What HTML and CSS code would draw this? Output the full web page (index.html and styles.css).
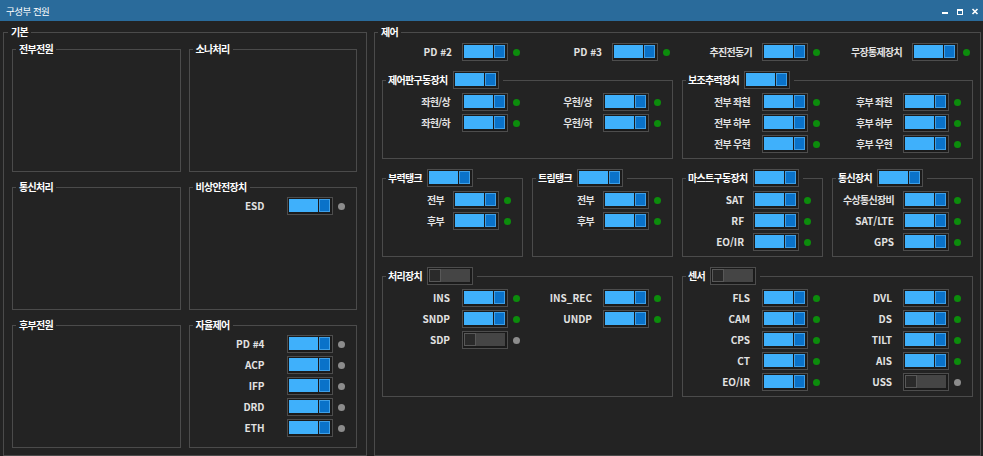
FILE: index.html
```html
<!DOCTYPE html>
<html lang="ko">
<head>
    <meta charset="UTF-8">
    <meta name="viewport" content="width=device-width, initial-scale=1.0">
    <title>구성부 전원</title>
    <link rel="stylesheet" href="styles.css">
</head>
<body>
<div class="window">

    <!-- 타이틀 바 -->
    <div class="titlebar">
        <span class="title">구성부 전원</span>
        <div class="winbtns">
            <svg width="10" height="10" viewBox="0 0 10 10"><line x1="2" y1="7" x2="8" y2="7" stroke="#fff" stroke-width="2"/></svg>
            <svg width="10" height="10" viewBox="0 0 10 10"><rect x="2.5" y="3.5" width="5" height="5" fill="none" stroke="#fff" stroke-width="1"/><line x1="2" y1="4" x2="8" y2="4" stroke="#fff" stroke-width="2"/></svg>
            <svg width="10" height="10" viewBox="0 0 10 10"><path d="M2.5 3 L7.5 8 M7.5 3 L2.5 8" stroke="#fff" stroke-width="1.6"/></svg>
        </div>
    </div>

    <div class="panels">

        <!-- 기본 -->
        <fieldset class="basic">
            <legend class="main-title ko">기본</legend>
            <div class="basic-grid">
                <fieldset class="box"><legend class="ko">전부전원</legend></fieldset>
                <fieldset class="box"><legend class="ko">소나처리</legend></fieldset>
                <fieldset class="box"><legend class="ko">통신처리</legend></fieldset>
                <fieldset class="box">
                    <legend class="ko">비상안전장치</legend>
                    <div class="rows">
                        <div class="row"><span class="lbl">ESD</span><span class="toggle on"><span class="track"></span><span class="thumb"></span></span><span class="dot grey"></span></div>
                    </div>
                </fieldset>
                <fieldset class="box"><legend class="ko">후부전원</legend></fieldset>
                <fieldset class="box">
                    <legend class="ko">자율제어</legend>
                    <div class="rows">
                        <div class="row"><span class="lbl">PD #4</span><span class="toggle on"><span class="track"></span><span class="thumb"></span></span><span class="dot grey"></span></div>
                        <div class="row"><span class="lbl">ACP</span><span class="toggle on"><span class="track"></span><span class="thumb"></span></span><span class="dot grey"></span></div>
                        <div class="row"><span class="lbl">IFP</span><span class="toggle on"><span class="track"></span><span class="thumb"></span></span><span class="dot grey"></span></div>
                        <div class="row"><span class="lbl">DRD</span><span class="toggle on"><span class="track"></span><span class="thumb"></span></span><span class="dot grey"></span></div>
                        <div class="row"><span class="lbl">ETH</span><span class="toggle on"><span class="track"></span><span class="thumb"></span></span><span class="dot grey"></span></div>
                    </div>
                </fieldset>
            </div>
        </fieldset>

        <!-- 제어 -->
        <fieldset class="control">
            <legend class="main-title ko">제어</legend>
            <div class="control-grid">

                <div class="row top"><span class="lbl">PD #2</span><span class="toggle on"><span class="track"></span><span class="thumb"></span></span><span class="dot green"></span></div>
                <div class="row top"><span class="lbl">PD #3</span><span class="toggle on"><span class="track"></span><span class="thumb"></span></span><span class="dot green"></span></div>
                <div class="row top"><span class="lbl ko">추진전동기</span><span class="toggle on"><span class="track"></span><span class="thumb"></span></span><span class="dot green"></span></div>
                <div class="row top"><span class="lbl ko">무장통제장치</span><span class="toggle on"><span class="track"></span><span class="thumb"></span></span><span class="dot green"></span></div>

                <fieldset class="group span2">
                    <legend class="head"><span class="ko">제어판구동장치</span><span class="toggle on"><span class="track"></span><span class="thumb"></span></span></legend>
                    <div class="rows two">
                        <div class="row"><span class="lbl ko">좌현/상</span><span class="toggle on"><span class="track"></span><span class="thumb"></span></span><span class="dot green"></span></div>
                        <div class="row"><span class="lbl ko">우현/상</span><span class="toggle on"><span class="track"></span><span class="thumb"></span></span><span class="dot green"></span></div>
                        <div class="row"><span class="lbl ko">좌현/하</span><span class="toggle on"><span class="track"></span><span class="thumb"></span></span><span class="dot green"></span></div>
                        <div class="row"><span class="lbl ko">우현/하</span><span class="toggle on"><span class="track"></span><span class="thumb"></span></span><span class="dot green"></span></div>
                    </div>
                </fieldset>

                <fieldset class="group span2">
                    <legend class="head"><span class="ko">보조추력장치</span><span class="toggle on"><span class="track"></span><span class="thumb"></span></span></legend>
                    <div class="rows two">
                        <div class="row"><span class="lbl ko">전부 좌현</span><span class="toggle on"><span class="track"></span><span class="thumb"></span></span><span class="dot green"></span></div>
                        <div class="row"><span class="lbl ko">후부 좌현</span><span class="toggle on"><span class="track"></span><span class="thumb"></span></span><span class="dot green"></span></div>
                        <div class="row"><span class="lbl ko">전부 하부</span><span class="toggle on"><span class="track"></span><span class="thumb"></span></span><span class="dot green"></span></div>
                        <div class="row"><span class="lbl ko">후부 하부</span><span class="toggle on"><span class="track"></span><span class="thumb"></span></span><span class="dot green"></span></div>
                        <div class="row"><span class="lbl ko">전부 우현</span><span class="toggle on"><span class="track"></span><span class="thumb"></span></span><span class="dot green"></span></div>
                        <div class="row"><span class="lbl ko">후부 우현</span><span class="toggle on"><span class="track"></span><span class="thumb"></span></span><span class="dot green"></span></div>
                    </div>
                </fieldset>

                <fieldset class="group">
                    <legend class="head"><span class="ko">부력탱크</span><span class="toggle on"><span class="track"></span><span class="thumb"></span></span></legend>
                    <div class="rows q">
                        <div class="row"><span class="lbl ko">전부</span><span class="toggle on"><span class="track"></span><span class="thumb"></span></span><span class="dot green"></span></div>
                        <div class="row"><span class="lbl ko">후부</span><span class="toggle on"><span class="track"></span><span class="thumb"></span></span><span class="dot green"></span></div>
                    </div>
                </fieldset>

                <fieldset class="group">
                    <legend class="head"><span class="ko">트림탱크</span><span class="toggle on"><span class="track"></span><span class="thumb"></span></span></legend>
                    <div class="rows q">
                        <div class="row"><span class="lbl ko">전부</span><span class="toggle on"><span class="track"></span><span class="thumb"></span></span><span class="dot green"></span></div>
                        <div class="row"><span class="lbl ko">후부</span><span class="toggle on"><span class="track"></span><span class="thumb"></span></span><span class="dot green"></span></div>
                    </div>
                </fieldset>

                <fieldset class="group">
                    <legend class="head"><span class="ko">마스트구동장치</span><span class="toggle on"><span class="track"></span><span class="thumb"></span></span></legend>
                    <div class="rows q">
                        <div class="row"><span class="lbl">SAT</span><span class="toggle on"><span class="track"></span><span class="thumb"></span></span><span class="dot green"></span></div>
                        <div class="row"><span class="lbl">RF</span><span class="toggle on"><span class="track"></span><span class="thumb"></span></span><span class="dot green"></span></div>
                        <div class="row"><span class="lbl">EO/IR</span><span class="toggle on"><span class="track"></span><span class="thumb"></span></span><span class="dot green"></span></div>
                    </div>
                </fieldset>

                <fieldset class="group">
                    <legend class="head"><span class="ko">통신장치</span><span class="toggle on"><span class="track"></span><span class="thumb"></span></span></legend>
                    <div class="rows q">
                        <div class="row"><span class="lbl ko">수상통신장비</span><span class="toggle on"><span class="track"></span><span class="thumb"></span></span><span class="dot green"></span></div>
                        <div class="row"><span class="lbl">SAT/LTE</span><span class="toggle on"><span class="track"></span><span class="thumb"></span></span><span class="dot green"></span></div>
                        <div class="row"><span class="lbl">GPS</span><span class="toggle on"><span class="track"></span><span class="thumb"></span></span><span class="dot green"></span></div>
                    </div>
                </fieldset>

                <fieldset class="group span2">
                    <legend class="head"><span class="ko">처리장치</span><span class="toggle off"><span class="thumb"></span><span class="track"></span></span></legend>
                    <div class="rows two">
                        <div class="row"><span class="lbl">INS</span><span class="toggle on"><span class="track"></span><span class="thumb"></span></span><span class="dot green"></span></div>
                        <div class="row"><span class="lbl">INS_REC</span><span class="toggle on"><span class="track"></span><span class="thumb"></span></span><span class="dot green"></span></div>
                        <div class="row"><span class="lbl">SNDP</span><span class="toggle on"><span class="track"></span><span class="thumb"></span></span><span class="dot green"></span></div>
                        <div class="row"><span class="lbl">UNDP</span><span class="toggle on"><span class="track"></span><span class="thumb"></span></span><span class="dot green"></span></div>
                        <div class="row"><span class="lbl">SDP</span><span class="toggle off"><span class="thumb"></span><span class="track"></span></span><span class="dot grey"></span></div>
                    </div>
                </fieldset>

                <fieldset class="group span2">
                    <legend class="head"><span class="ko">센서</span><span class="toggle off"><span class="thumb"></span><span class="track"></span></span></legend>
                    <div class="rows two">
                        <div class="row"><span class="lbl">FLS</span><span class="toggle on"><span class="track"></span><span class="thumb"></span></span><span class="dot green"></span></div>
                        <div class="row"><span class="lbl">DVL</span><span class="toggle on"><span class="track"></span><span class="thumb"></span></span><span class="dot green"></span></div>
                        <div class="row"><span class="lbl">CAM</span><span class="toggle on"><span class="track"></span><span class="thumb"></span></span><span class="dot green"></span></div>
                        <div class="row"><span class="lbl">DS</span><span class="toggle on"><span class="track"></span><span class="thumb"></span></span><span class="dot green"></span></div>
                        <div class="row"><span class="lbl">CPS</span><span class="toggle on"><span class="track"></span><span class="thumb"></span></span><span class="dot green"></span></div>
                        <div class="row"><span class="lbl">TILT</span><span class="toggle on"><span class="track"></span><span class="thumb"></span></span><span class="dot green"></span></div>
                        <div class="row"><span class="lbl">CT</span><span class="toggle on"><span class="track"></span><span class="thumb"></span></span><span class="dot green"></span></div>
                        <div class="row"><span class="lbl">AIS</span><span class="toggle on"><span class="track"></span><span class="thumb"></span></span><span class="dot green"></span></div>
                        <div class="row"><span class="lbl">EO/IR</span><span class="toggle on"><span class="track"></span><span class="thumb"></span></span><span class="dot green"></span></div>
                        <div class="row"><span class="lbl">USS</span><span class="toggle off"><span class="thumb"></span><span class="track"></span></span><span class="dot grey"></span></div>
                    </div>
                </fieldset>

            </div>
        </fieldset>

    </div>
</div>
</body>
</html>
```

FILE: styles.css
```css
body {
    margin: 0;
    background-color: #232323;
    font-family: "Noto Sans CJK KR", sans-serif;
    font-size: 10px;
    color: #e2e2e2;
}

.window {
    width: 983px;
    height: 456px;
    display: flex;
    flex-direction: column;
    overflow: hidden;
}

/* 타이틀 바 */
.titlebar {
    flex: none;
    height: 21px;
    background-color: #2a6b9b;
    color: #fff;
    display: flex;
    align-items: center;
    justify-content: space-between;
    padding: 0 3px 0 6px;
}

.title {
    font-size: 9.5px;
    letter-spacing: -0.5px;
}

.winbtns {
    display: flex;
    gap: 5px;
}

.winbtns svg {
    display: block;
}

.panels {
    flex: 1;
    min-height: 0;
    display: flex;
    gap: 7px;
    padding: 5px 2px 0 3px;
}

/* 그룹 박스 */
fieldset {
    margin: 0;
    min-width: 0;
    border: 1px solid #4b4b4b;
    box-sizing: border-box;
}

legend {
    padding: 0 3px;
    line-height: 12px;
    font-weight: bold;
    color: #fff;
}

.ko {
    letter-spacing: -0.7px;
}

.main-title {
    margin-left: -4px;
}

.basic {
    width: 364px;
    flex: none;
    padding: 5px 9px 6px 8px;
}

.control {
    flex: 1;
    padding: 5px 7px 0 7px;
}

.basic-grid {
    display: grid;
    grid-template-columns: 1fr 1fr;
    gap: 9px 8px;
}

.box {
    height: 129px;
    padding: 4px 6px 5px 3px;
}

.control-grid {
    display: grid;
    grid-template-columns: repeat(4, 1fr);
    gap: 10px 9px;
}

.span2 {
    grid-column: span 2;
}

.group {
    padding: 4px 6px 5px 3px;
}

.head {
    display: flex;
    align-items: center;
    gap: 5px;
    padding: 0 4px 0 2px;
}

/* 항목 행 */
.rows {
    display: flex;
    flex-direction: column;
    gap: 3px;
}

.rows.two {
    display: grid;
    grid-template-columns: 146px 1fr;
    gap: 3px 0;
}

.row {
    display: flex;
    align-items: center;
    height: 18px;
}

.lbl {
    box-sizing: border-box;
    text-align: right;
    padding-right: 11px;
    font-weight: bold;
    white-space: nowrap;
    line-height: 12px;
}

.top .lbl {
    width: 80px;
    padding-right: 10px;
}

.box .lbl {
    width: 94px;
    padding-right: 22px;
}

.q .lbl {
    width: 67px;
    padding-right: 9px;
}

.two .row:nth-child(odd) .lbl {
    width: 76px;
    padding-right: 12px;
}

.two .row:nth-child(even) .lbl {
    width: 71px;
}

/* 토글 스위치 */
.toggle {
    flex: none;
    box-sizing: border-box;
    width: 46px;
    height: 18px;
    border: 1px solid #4d4d4d;
    background-color: #1b1b1b;
    padding: 1px 2px 2px 1px;
    display: flex;
    gap: 1px;
}

.toggle .track {
    flex: 1;
}

.toggle .thumb {
    width: 11px;
    box-sizing: border-box;
}

.toggle.on .track {
    background-color: #3fb0fb;
}

.toggle.on .thumb {
    background-color: #0a72c9;
    border: 1px solid #3f9fe6;
}

.toggle.off {
    gap: 0;
}

.toggle.off .thumb {
    width: 12px;
    background-color: #2a2a2a;
    border: 1px solid #585858;
}

.toggle.off .track {
    background-color: #454545;
}

/* 상태 표시등 */
.dot {
    flex: none;
    width: 7px;
    height: 7px;
    border-radius: 50%;
    margin-left: 5px;
}

.dot.green {
    background-color: #0c8c0c;
}

.dot.grey {
    background-color: #8c8c8c;
}
```
